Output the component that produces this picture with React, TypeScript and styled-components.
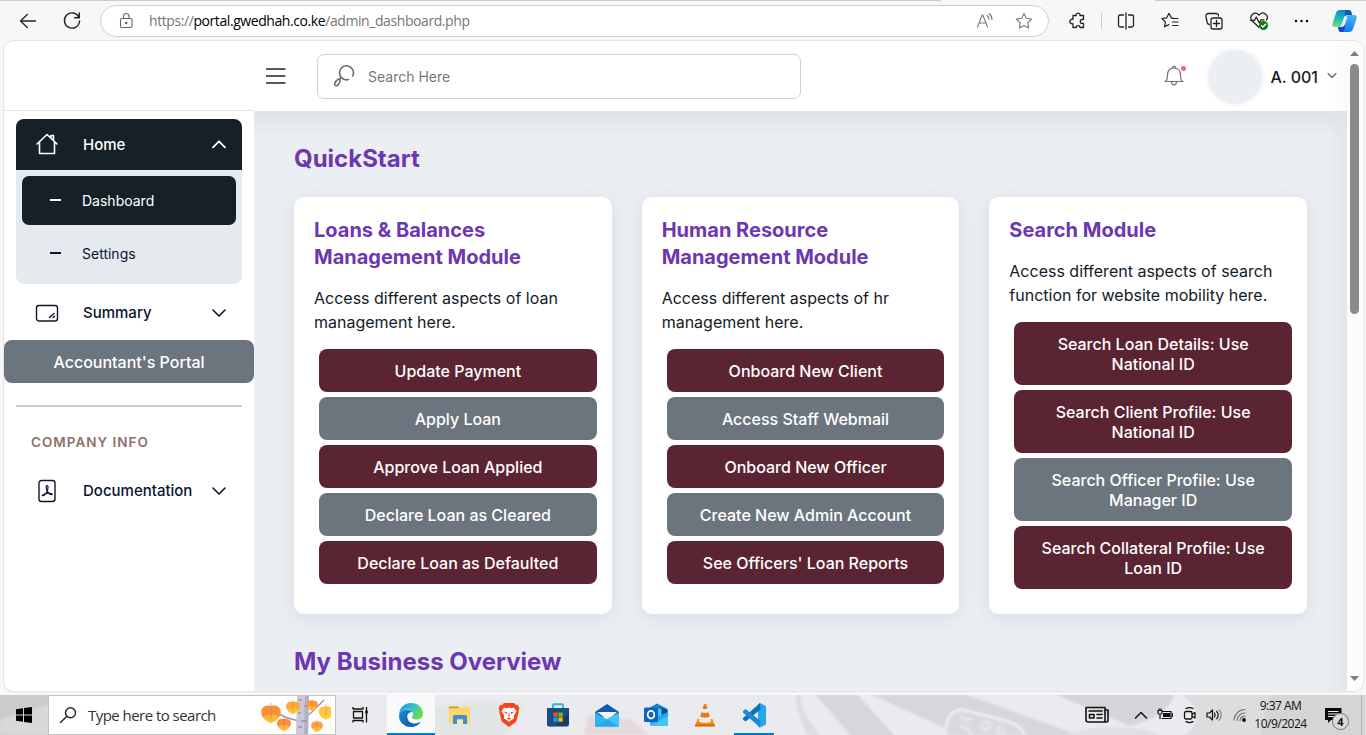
import React from "react";
import styled, { createGlobalStyle } from "styled-components";

const GlobalStyle = createGlobalStyle`
  * { box-sizing: border-box; }
  html, body { margin: 0; padding: 0; }
  body { width: 1366px; height: 735px; overflow: hidden; background: #f7f7f7; font-family: Inter, "Liberation Sans", sans-serif; color: #132027; }
  button { font: inherit; border: 0; cursor: pointer; }
  svg { display: block; flex: none; }
  h2, h3, p { margin: 0; }
`;

const Screen = styled.div`
  display: flex;
  flex-direction: column;
  width: 1366px;
  height: 735px;
`;

/* ---------- browser chrome ---------- */

const BrowserBar = styled.div`
  display: flex;
  align-items: center;
  height: 41px;
  flex: none;
  padding: 1px 0 0 18px;
  background: linear-gradient(90deg, #cbcbcb 941px, #f7f7f7 941px, #f7f7f7 1155px, #cbcbcb 1155px) top / 100% 1px no-repeat #f7f7f7;
`;

const BarIcon = styled.span<{ $gap?: number }>`
  display: flex;
  margin-left: ${(p) => p.$gap ?? 0}px;
`;

const AddressBar = styled.div`
  display: flex;
  align-items: center;
  width: 949px;
  flex: none;
  height: 32px;
  margin-left: 18px;
  padding: 0 15px 0 15px;
  border: 1px solid #cfcfcf;
  border-radius: 16px;
  background: #fff;
`;

const Url = styled.span`
  flex: 1;
  margin-left: 13px;
  font: 14px/20px "Open Sans", sans-serif;
  letter-spacing: -0.42px;
  color: #767676;
  white-space: nowrap;
  b { font-weight: 400; color: #000; }
`;

const BarDivider = styled.i`
  width: 1px;
  height: 16px;
  margin-left: 13px;
  background: #cdcdcd;
`;

/* ---------- page frame ---------- */

const Frame = styled.div`
  display: flex;
  width: 1359px;
  height: 650px;
  margin-left: 4px;
  flex: none;
  border-radius: 9px;
  overflow: hidden;
  background: #fff;
  box-shadow: 0 0 0 1px #e6e6e6, 0 1px 1px #c8c8c8;
`;

const Sidebar = styled.aside`
  display: flex;
  flex-direction: column;
  width: 250px;
  flex: none;
`;

const BrandArea = styled.div`
  height: 70px;
  flex: none;
  border-bottom: 1px solid #e2e3e4;
`;

const NavGroup = styled.div`
  margin: 8px 12px 0;
  border-radius: 8px;
  overflow: hidden;
  background: #e5eaee;
`;

const NavItem = styled.div<{ $active?: boolean }>`
  display: flex;
  align-items: center;
  height: 51px;
  padding: 0 15px ${(p) => (p.$active ? 1 : 0)}px 19px;
  font-size: 15px;
  font-weight: 500;
  color: ${(p) => (p.$active ? "#fff" : "#0b1330")};
  background: ${(p) => (p.$active ? "#152127" : "transparent")};
  span { flex: 1; margin-left: 24px; }
`;

const NavRow = styled.div<{ $top: number }>`
  margin: ${(p) => p.$top}px 12px 0;
`;

const SubItem = styled.div<{ $active?: boolean }>`
  display: flex;
  align-items: center;
  height: 49px;
  margin: ${(p) => (p.$active ? "6px 6px 0" : "4px 6px 6px")};
  padding: 0 28px;
  border-radius: 7px;
  font-size: 14px;
  color: ${(p) => (p.$active ? "#fff" : "#0b1330")};
  background: ${(p) => (p.$active ? "#152127" : "transparent")};
  &::before {
    content: "";
    width: 11px;
    height: 2px;
    margin: 0 21px 2px 0;
    background: currentColor;
  }
`;

const ActionButton = styled.button<{ $tone?: "wine" | "slate" }>`
  display: block;
  width: 100%;
  flex: none;
  padding: 11.5px 24px;
  border-radius: 8px;
  font-size: 16px;
  line-height: 20px;
  font-weight: 500;
  color: #fff;
  background: ${(p) => (p.$tone === "slate" ? "#6c757d" : "#5b2432")};
`;

const PortalButton = styled(ActionButton)`
  margin-top: 2px;
`;

const SideRule = styled.div`
  height: 2px;
  flex: none;
  margin: 22px 12px 0;
  background: #c9cbcb;
`;

const SideHeading = styled.div`
  margin: 26px 27px 0;
  font-size: 13.5px;
  line-height: 18px;
  font-weight: 600;
  letter-spacing: 1px;
  color: #8d7067;
`;

const Body = styled.div`
  display: flex;
  flex-direction: column;
  width: 1093px;
  flex: none;
`;

const TopBar = styled.header`
  display: flex;
  align-items: center;
  height: 70px;
  flex: none;
  padding: 0 10px 0 12px;
  background: linear-gradient(90deg, #fff 1073px, #fafafa 100%);
`;

const SearchBox = styled.div`
  display: flex;
  align-items: center;
  width: 484px;
  height: 45px;
  margin-left: 31px;
  padding-left: 15px;
  border: 1px solid #cfd1d4;
  border-radius: 7px;
  font-size: 14px;
  color: #717980;
  span { margin: 1px 0 0 13px; }
`;

const BellHolder = styled.div`
  position: relative;
  margin-left: auto;
`;

const BellDot = styled.i`
  position: absolute;
  top: 2px;
  right: -2px;
  width: 5px;
  height: 5px;
  border-radius: 50%;
  background: #ff5c8a;
`;

const Avatar = styled.div`
  width: 52px;
  height: 52px;
  margin: 1px 0 0 25px;
  border-radius: 50%;
  background: #ebeef3;
  box-shadow: 0 0 4px 1px #e6e8eb;
`;

const UserName = styled.span`
  margin: 2px 9px 0 9px;
  font-size: 16px;
  font-weight: 500;
`;

const Content = styled.main`
  flex: 1;
  overflow: hidden;
  padding: 33px 40px 0;
  background:
    linear-gradient(180deg, #dfe3e8 0, rgba(235, 238, 243, 0) 26px),
    linear-gradient(270deg, #e2e6eb 0, rgba(235, 238, 243, 0) 20px),
    #ebeef3;
`;

const SectionTitle = styled.h2`
  font-size: 24px;
  line-height: 29px;
  font-weight: 700;
  color: #6c37b0;
`;

const Cards = styled.div`
  display: grid;
  grid-template-columns: repeat(3, 1fr);
  gap: 30px;
  height: 417px;
  margin: 24px 0 33px;
`;

const Card = styled.section`
  padding: 20px;
  border-radius: 10px;
  background: #fff;
  box-shadow: 0 4px 20px 1px rgba(20, 40, 50, 0.07);
`;

const CardTitle = styled.h3`
  font-size: 20px;
  line-height: 27px;
  font-weight: 700;
  color: #6c37b0;
`;

const CardText = styled.p`
  margin-top: 15px;
  font-size: 16px;
  line-height: 24px;
  white-space: pre-line;
`;

const ButtonStack = styled.div`
  display: flex;
  flex-direction: column;
  gap: 5px;
  margin: 15px -5px 0 5px;
`;

const ScrollTrack = styled.div`
  display: flex;
  flex-direction: column;
  align-items: center;
  width: 15px;
  padding: 10px 0 10px;
  background: #fcfcfc;
`;

const ScrollThumb = styled.div`
  width: 9px;
  height: 250px;
  margin: 8px 0 auto;
  border-radius: 5px;
  background: #8a8a8a;
`;

/* ---------- desktop taskbar ---------- */

const Taskbar = styled.footer`
  position: relative;
  display: flex;
  align-items: stretch;
  height: 40px;
  margin-top: 4px;
  flex: none;
  isolation: isolate;
  overflow: hidden;
  background: #e9ebee;
`;

const Wallpaper = styled.svg`
  position: absolute;
  inset: 0;
  z-index: -1;
`;

const StartButton = styled.div`
  display: flex;
  align-items: center;
  justify-content: center;
  width: 48px;
  flex: none;
`;

const TaskSearch = styled.div`
  display: flex;
  align-items: center;
  width: 288px;
  flex: none;
  padding: 0 4px 0 10px;
  border: 1px solid #c4c4c4;
  background: #fff;
  font: 15px/20px "Open Sans", sans-serif;
  letter-spacing: -0.54px;
  color: #333;
  white-space: nowrap;
  span { flex: 1; margin-left: 11px; }
`;

const TaskItem = styled.div<{ $width?: number; $lit?: boolean; $running?: boolean }>`
  display: flex;
  align-items: center;
  justify-content: center;
  width: ${(p) => p.$width ?? 49}px;
  flex: none;
  background: ${(p) => (p.$lit ? "#f8f9fa" : "transparent")};
  box-shadow: ${(p) => (p.$running ? "inset 0 -2px #0078d4" : "none")};
`;

const Tray = styled.div`
  display: flex;
  align-items: center;
  margin-left: auto;
  padding-right: 16px;
`;

const Clock = styled.div`
  width: 61px;
  margin-left: 3px;
  font: 12px/18px "Open Sans", sans-serif;
  letter-spacing: -0.5px;
  text-align: center;
  color: #111;
  white-space: nowrap;
`;

const Notice = styled.div`
  position: relative;
  margin-left: 14px;
  padding-right: 8px;
`;

const NoticeCount = styled.span`
  position: absolute;
  left: 7px;
  top: 6px;
  width: 17px;
  height: 17px;
  border: 1px solid #777;
  border-radius: 50%;
  background: #d9dadb;
  font: 700 11px/15px "Open Sans", sans-serif;
  text-align: center;
  color: #111;
`;

/* ---------- icons ---------- */

type IconProps = { w?: number; h?: number; color?: string; sw?: number; children: React.ReactNode };

const Icon = ({ w = 20, h = 20, color = "#222", sw = 1.2, children }: IconProps) => (
  <svg width={w} height={h} viewBox={`0 0 ${w} ${h}`} fill="none" stroke={color} strokeWidth={sw} strokeLinecap="round" strokeLinejoin="round">
    {children}
  </svg>
);

const Chevron = ({ up = false, color = "#0b1330" }: { up?: boolean; color?: string }) => (
  <Icon w={16} h={16} color={color} sw={up ? 1.8 : 1.6}>
    <path d={up ? "M2 11.3 8 5.3l6 6" : "M2 5 8 11l6-6"} />
  </Icon>
);

const Edge = () => (
  <svg width="26" height="26" viewBox="0 0 26 26">
    <defs>
      <linearGradient id="edgeTop" x1="0" y1="0" x2="1" y2="0.4">
        <stop offset="0" stopColor="#2196d8" />
        <stop offset="0.55" stopColor="#2fc0cf" />
        <stop offset="1" stopColor="#66dd55" />
      </linearGradient>
      <linearGradient id="edgeLow" x1="0" y1="0" x2="1" y2="1">
        <stop offset="0" stopColor="#1b8bdc" />
        <stop offset="1" stopColor="#0c4f99" />
      </linearGradient>
    </defs>
    <path d="M1 14C1 6 6 1 13 1s12 5 12 10.500c0 4-3 6-6.500 6-3 0-4.500-1.200-4.500-2.200 0-.8 1.200-1.300 1.200-3.300 0-2.500-2.500-4.500-6-4.500C5 7.500 2 10 1 14Z" fill="url(#edgeTop)" />
    <path d="M1 14C1.500 10 5 7.700 9 7.700c2.500 0 4.600 1 5.600 2.400-3.600-.4-5.400 2-5.400 4.700 0 4.700 4.500 7.600 9 6.700 2-.4 3.500-1.200 4.200-1.400C20.600 23 17 25 13 25 6 25 1 20 1 14Z" fill="url(#edgeLow)" />
    <path d="M9.300 13c-1.500 6 3.500 10 9 8.600 2-.5 3.400-1.300 4.100-1.500C20.600 23 17 25 13.500 25 8 24 6 17 9.300 13Z" fill="#1667b3" />
  </svg>
);

const Explorer = () => (
  <svg width="22" height="20" viewBox="0 0 22 20">
    <path d="M0 1.500h9l2 2H0Z" fill="#d99a12" />
    <path d="M0 3.500h10l1.500-1.500H21V18H0Z" fill="#ffd667" />
    <path d="M4 19v-7.500C4 10.600 4.500 10 5.500 10h11c1 0 1.500.6 1.500 1.500V19h-4v-4.500H8V19Z" fill="#3f91d3" />
    <path d="M8 14.500h6V18H8Z" fill="#ffe79a" />
  </svg>
);

const Brave = () => (
  <svg width="22" height="24" viewBox="0 0 22 24">
    <path d="M6 0h10l2 2.200 2-.2 1.300 3.500-.8 2 .2 1.500-2.400 9.500L11 24l-7.300-5.500L1.300 9l.2-1.500-.8-2L2 2l2 .2Z" fill="#f8421c" />
    <path d="m6 4.500 2.500.7 2.500-.7 2.500.7 2.500-.7 2.500 4-2.700 4 .2 3-2.200 1.200-2.800 2.300-2.800-2.300L6 15.500l.2-3-2.700-4Z" fill="#fff" />
    <path d="m5.700 8.500 3.700.7-.9 1.900Zm10.600 0-3.700.7.900 1.900ZM11 8.500l.7 4.500-.7 1-.7-1Zm-2.300 7 2.300-1 2.300 1-2.300 1.300Z" fill="#f8421c" />
  </svg>
);

const Store = () => (
  <svg width="24" height="24" viewBox="0 0 24 24">
    <path d="M7 5.500V2.200c0-.5.400-.9.900-.9h8.200c.5 0 .9.400.9.900v3.300" fill="none" stroke="#25b5ed" strokeWidth="1.900" />
    <path d="M1 5h22v16a2.500 2.500 0 0 1-2.500 2.500h-17A2.500 2.500 0 0 1 1 21Z" fill="#1b3c66" />
    <path d="M1 5h22v5L8 23.500H3.500A2.500 2.500 0 0 1 1 21Z" fill="#1a5c96" opacity=".55" />
    <path d="M7.500 9.500h4.200v4.200H7.500Z" fill="#f25022" />
    <path d="M12.500 9.500h4.200v4.200h-4.200Z" fill="#7fba00" />
    <path d="M7.500 14.500h4.200v4.200H7.500Z" fill="#00a4ef" />
    <path d="M12.500 14.500h4.200v4.200h-4.200Z" fill="#ffb900" />
  </svg>
);

const Mail = () => (
  <svg width="24" height="23" viewBox="0 0 24 23">
    <path d="M0 8 12 0l12 8v5H0Z" fill="#0b5cab" />
    <path d="M2 8h20l-9 8Z" fill="#f2f4f6" />
    <path d="M0 8.500 24 22.500H0Z" fill="#2fb4f0" />
    <path d="M24 8.500v14L0 22.500 11.500 15Z" fill="#42c4f7" />
    <path d="m0 22.500 12-7.200L24 22.500Z" fill="#27a6ea" />
  </svg>
);

const Outlook = () => (
  <svg width="24" height="24" viewBox="0 0 24 24">
    <path d="m5 5 8-4.500L23.500 6v8H5Z" fill="#1383d2" />
    <path d="m15 4 8.500 3v7L14 17Z" fill="#0a4c91" />
    <path d="M10 5.500h7.500V13H10Z" fill="#46c2f5" />
    <path d="M6 14h6l12-5v12a2 2 0 0 1-2 2H8a2 2 0 0 1-2-2Z" fill="#25a9ec" />
    <path d="M6 22.500 24 13v8a2 2 0 0 1-2 2H8Z" fill="#42c5f6" />
    <rect x="0" y="4.500" width="14" height="14.500" rx="1.200" fill="#0f65bd" />
    <ellipse cx="7" cy="11.700" rx="3.300" ry="3.800" fill="none" stroke="#fff" strokeWidth="1.800" />
  </svg>
);

const Cone = () => (
  <svg width="22" height="24" viewBox="0 0 22 24">
    <path d="M3.500 16h15L21 23H1Z" fill="#f48b13" />
    <path d="M1 21.500h20V23.500H1Z" fill="#d66700" />
    <path d="M9.600 2c.3-1.200 2.500-1.200 2.800 0l4.800 16.300c-2 2-10.400 2-12.400 0Z" fill="#f0eeec" />
    <path d="M9.600 2c.3-1.200 2.500-1.200 2.800 0l1 3.500c-1 .8-3.800.8-4.800 0ZM7.500 9.300c1.700 1 5.300 1 7 0l1.300 4.300c-2 1.500-7.600 1.500-9.600 0Z" fill="#ee7618" />
  </svg>
);

const Code = () => (
  <svg width="25" height="25" viewBox="0 0 25 25">
    <path d="m18 0 6 3v18.500l-6 3-2-1V1.500Z" fill="#27a5ee" />
    <path d="m18 0 .5 6.500L3.600 18.500 1 16.500v-1.600Z" fill="#0874bd" />
    <path d="M1 9.500v-1.600l2.600-2 14.900 12L18 24.500Z" fill="#168bd3" />
  </svg>
);

const Copilot = () => (
  <svg width="25" height="24" viewBox="0 0 25 24">
    <defs>
      <linearGradient id="copLeft" x1="0.5" y1="0" x2="0.3" y2="1">
        <stop offset="0" stopColor="#0c86d2" />
        <stop offset="0.5" stopColor="#20b9ae" />
        <stop offset="1" stopColor="#72dc82" />
      </linearGradient>
      <linearGradient id="copRight" x1="0.5" y1="0" x2="0.5" y2="1">
        <stop offset="0" stopColor="#49b4f4" />
        <stop offset="1" stopColor="#147cf0" />
      </linearGradient>
    </defs>
    <path d="M8 1h9c2 0 2.500 2 3 5h-4.500c-2 0-3 1-3.700 3l-2 6c-.8 2.200-2 3-4 3H3c-2.500 0-3-1.500-2.400-4L4 4c.7-2 2-3 4-3Z" fill="url(#copLeft)" />
    <path d="M13 1h4c2 0 2.500 2 3 5h-4.500c-1 0-2 .5-2.500 1.500Z" fill="#1155b5" />
    <path d="M17 23H9c-2 0-2.500-2-3-5h1.500c2 0 3.200-.8 4-3l2-6c.7-2 1.500-3 3.500-3h5c2.500 0 3 1.500 2.400 4L21 20c-.7 2-2 3-4 3Z" fill="url(#copRight)" />
    <path d="M6 18h1.500c2 0 3.200-.8 4-3l1-3 .5 8-2 3H9c-2 0-2.500-2-3-5Z" fill="#1649c8" />
    <path d="M15.500 7 13 15c-1 2.500-2 3-5 3 2.500-1 3-2 3.500-4l2-5Z" fill="#f7f7f7" />
  </svg>
);

const leaves = [
  [17, 17, 10, "#fb9038"],
  [39, 11, 7, "#fda92d"],
  [30, 28, 7, "#fb8c3c"],
  [58, 9, 6, "#f99743"],
  [72, 16, 7.5, "#ffc642"],
  [63, 30, 6, "#fba13f"],
] as const;

const AutumnTree = () => (
  <svg width="70" height="38" viewBox="3 0 70 38">
    <path d="M18 17 30 22l14 4M38 14l8 9M66 4 54 16l-6 5M52 5l2 9" stroke="#9a98a8" strokeWidth="1.500" fill="none" />
    <path d="M39 0h12l-1 38H38Z" fill="#c9c7d8" />
    <path d="M47 0h4l-1 38h-4Z" fill="#b3b0c6" />
    <path d="M40 4h4M46 10h4M40 17h3M43 25h6M40 31h4" stroke="#86839a" strokeWidth="1" />
    {leaves.map(([x, y, r, fill]) => (
      <g key={x} transform={`translate(${x - 4} ${y})`}>
        <path d={`M0 ${r}C${-r * 1.500} ${r * 0.4} ${-r * 1.100} ${-r} 0 ${-r * 0.7}C${r * 1.100} ${-r} ${r * 1.500} ${r * 0.4} 0 ${r}Z`} fill={fill} />
        <path d={`M0 ${r}C${-r * 1.100} ${r * 0.7} ${-r * 0.9} ${r * 0.1} 0 ${r * 0.2}C${r * 0.9} ${r * 0.1} ${r * 1.100} ${r * 0.7} 0 ${r}Z`} fill="#ffd33d" opacity=".6" />
        <path d={`M0 ${-r}V${r * 0.6}`} stroke="#d77b20" strokeWidth=".5" />
      </g>
    ))}
  </svg>
);

/* ---------- data ---------- */

type Action = [string, "wine" | "slate"];
const modules: { title: string; text: string; actions: Action[] }[] = [
  {
    title: "Loans & Balances Management Module",
    text: "Access different aspects of loan\nmanagement here.",
    actions: [
      ["Update Payment", "wine"],
      ["Apply Loan", "slate"],
      ["Approve Loan Applied", "wine"],
      ["Declare Loan as Cleared", "slate"],
      ["Declare Loan as Defaulted", "wine"],
    ],
  },
  {
    title: "Human Resource Management Module",
    text: "Access different aspects of hr\nmanagement here.",
    actions: [
      ["Onboard New Client", "wine"],
      ["Access Staff Webmail", "slate"],
      ["Onboard New Officer", "wine"],
      ["Create New Admin Account", "slate"],
      ["See Officers' Loan Reports", "wine"],
    ],
  },
  {
    title: "Search Module",
    text: "Access different aspects of search\nfunction for website mobility here.",
    actions: [
      ["Search Loan Details: Use National ID", "wine"],
      ["Search Client Profile: Use National ID", "wine"],
      ["Search Officer Profile: Use Manager ID", "slate"],
      ["Search Collateral Profile: Use Loan ID", "wine"],
    ],
  },
];

const STAR = "M9 1.500 11.300 6.300 16.600 7 12.700 10.700 13.700 16 9 13.400 4.300 16 5.300 10.700 1.400 7 6.700 6.300Z";

const Browser = () => (
  <BrowserBar>
    <BarIcon><Icon sw={1.3}><path d="M17.500 10H2.500M9.300 3.500 2.500 10l6.800 6.500" /></Icon></BarIcon>
    <BarIcon $gap={24}><Icon sw={1.4}><path d="M17 6.500A7.600 7.600 0 1 0 17.600 10M17.300 2v4.700h-4.600" /></Icon></BarIcon>
    <AddressBar>
      <Icon color="#666" sw={1.1}><rect x="4.500" y="7.500" width="11.500" height="9" rx="1.500" /><path d="M7.500 7.500V4.800a2.800 2.800 0 0 1 5.500 0v2.700" /><circle cx="10.200" cy="12" r=".7" fill="#666" /></Icon>
      <Url>https://<b>portal.gwedhah.co.ke</b>/admin_dashboard.php</Url>
      <Icon color="#777" sw={1.1}><path d="m2.500 16 4.700-12h.6l4.700 12M4.200 12h6.600M12 4.500c1.400 1 2 2.400 2 4M14 2.500c2 1.500 3 3.500 3 6" /></Icon>
      <BarIcon $gap={20}><Icon w={18} h={18} color="#777" sw={1.1}><path d={STAR} /></Icon></BarIcon>
    </AddressBar>
    <BarIcon $gap={19}><Icon sw={1.3}><path d="M5 4.500h3.200c-.5-3.300 4.300-3.300 3.800 0h3.500v4h-1.300a1.900 1.900 0 0 0 0 3.800h1.300v4.200H12c0-2.600-3.800-2.600-3.800 0H5v-3.800c-4.200.8-4.200-5.200 0-4.400Z" /></Icon></BarIcon>
    <BarDivider />
    <BarIcon $gap={14}><Icon sw={1.3}><path d="M7.500 4H4.200C3 4 2.500 4.600 2.500 5.500v9c0 .9.500 1.500 1.700 1.500h3.300M12.500 4h3.300c1.200 0 1.700.6 1.700 1.500v9c0 .9-.5 1.500-1.700 1.500h-3.300M10 2v16" /></Icon></BarIcon>
    <BarIcon $gap={25}><Icon sw={1.2}><path d="M12 7 10.300 6.800 8 2.300 5.700 6.800.9 7.500l3.500 3.400-.8 4.900 4.200-2.200M11.500 7.500H17M11.500 11H17M11.500 14.500H17" /></Icon></BarIcon>
    <BarIcon $gap={23}><Icon sw={1.300}><rect x="7" y="7" width="11" height="11" rx="2" /><path d="M12.500 9.500v6M9.500 12.500h6M14.500 5c0-1.800-.8-2.500-2.500-2.500H4.500C2.800 2.500 1.500 3.800 1.900 5.500l1.300 6c.3 1.200 1 1.800 2 2" /></Icon></BarIcon>
    <BarIcon $gap={25}><Icon sw={1.300}><path d="M10 16.300 3 9.800C-1 5 6-1 10 4.200 14-1 20.500 4.500 17.500 9M1.500 9.300h4L7.300 6l3 6L12 8.800h3" /><circle cx="14.500" cy="14.500" r="4.500" fill="#127a16" stroke="none" /><path d="m12.500 14.600 1.400 1.400 2.700-2.800" stroke="#fff" /></Icon></BarIcon>
    <BarIcon $gap={23}><svg width="20" height="20"><circle cx="4" cy="10" r="1.200" /><circle cx="9.500" cy="10" r="1.200" /><circle cx="15" cy="10" r="1.200" /></svg></BarIcon>
    <BarIcon $gap={20}><Copilot /></BarIcon>
  </BrowserBar>
);

const SideNav = () => (
  <Sidebar>
    <BrandArea />
    <NavGroup>
      <NavItem $active>
        <Icon w={24} h={24} color="#fff" sw={1.6}><path d="m2 12 10-9.500L22 12M4.500 10v11.500h15V10M16 5.500V3.500h2.500V8" /></Icon>
        <span>Home</span>
        <Chevron up color="#fff" />
      </NavItem>
      <SubItem $active>Dashboard</SubItem>
      <SubItem>Settings</SubItem>
    </NavGroup>
    <NavRow $top={3}>
      <NavItem>
        <Icon w={24} h={24} color="#10162f" sw={1.4}><rect x="1.500" y="4.500" width="21" height="15.500" rx="2.500" /><path d="m14.500 16.500 4.500-4M18 16.500l1.500-1.300" /></Icon>
        <span>Summary</span>
        <Chevron />
      </NavItem>
    </NavRow>
    <PortalButton $tone="slate">Accountant's Portal</PortalButton>
    <SideRule />
    <SideHeading>COMPANY INFO</SideHeading>
    <NavRow $top={14}>
      <NavItem>
        <Icon w={24} h={24} color="#10162f" sw={1.4}><rect x="4" y="1.500" width="16" height="21" rx="2.500" /><path d="M12.200 6.500c-1.500 0-1.100 3.500 0 5.500.9 1.900 3 3.800 5 3.500-.3-2-7-2.200-9.900 1 1.700 1 4.200-2.500 4.900-4.500.9-2 1.200-5.500 0-5.500Z" strokeWidth="1.200" /></Icon>
        <span>Documentation</span>
        <Chevron />
      </NavItem>
    </NavRow>
  </Sidebar>
);

const Header = () => (
  <TopBar>
    <Icon w={20} h={20} color="#555b5f" sw={1.8}><path d="M0 3h19.500M0 10h19.500M0 17h19.500" strokeLinecap="butt" /></Icon>
    <SearchBox>
      <Icon w={22} h={22} color="#6c6c6c" sw={1.6}><path d="M15.500 14.500A7 7 0 1 1 19.700 11M7.500 13.200 6 14.500M6.300 13.800C4 14.500 1.500 17.500 1.600 19c.1 2 2.300 2 3.400.9C6.200 18.500 8 16 6.300 13.800Z" /></Icon>
      <span>Search Here</span>
    </SearchBox>
    <BellHolder>
      <Icon w={20} h={24} color="#737373" sw={1.2}><path d="M1 17.500h18M1.500 17.500C3.500 16 3.500 14 3.500 11 3.500 6.500 6 4 10 4s6.500 2.500 6.500 7c0 3 0 5 2 6.500M8.300 4c0-2.300 3.400-2.300 3.400 0M7.500 18c.3 4 4.700 4 5 0" /></Icon>
      <BellDot />
    </BellHolder>
    <Avatar />
    <UserName>A. 001</UserName>
    <Icon w={10} h={10} color="#61686c" sw={1.2}><path d="m1 2.500 4 4 4-4" /></Icon>
  </TopBar>
);

const DesktopBar = () => (
  <Taskbar>
    <Wallpaper width="1366" height="40" viewBox="0 0 1366 40">
      <defs>
        <filter id="soft" x="-2%" y="-20%" width="104%" height="140%"><feGaussianBlur stdDeviation="1" /></filter>
      </defs>
      <path d="M0 0h49v40H0Z" fill="#cccccd" />
      <g filter="url(#soft)">
        <path d="M0 24 49 10v30H0Z" fill="#d8d8d9" />
        <path d="M435 13c40-12 60-5 90-3l-20 30h-70Z" fill="#e1e5e5" />
        <path d="m588 20 42 4 20 16h-66Z" fill="#e4dadd" />
        <path d="M796-2h6c-2 20 8 25 18 44h-12c-6-15-12-25-12-44Z" fill="#dcdde0" />
        <path d="M814-2h42l40 44h-44ZM868-2h94l122 44h-70l-62-4-16-9Z" fill="#d6d7da" />
        <path d="M946 42c-2-14 4-29 18-27l40 10c14 4 20 10 22 17Z" fill="#d9dadd" stroke="#eff0f3" strokeWidth="2.500" />
        <path d="m961 22 7 3 4-2M960 31l8 3 4 6" fill="none" stroke="#e5e7ea" strokeWidth="3" />
        <circle cx="986" cy="31" r="4" fill="none" stroke="#e5e7ea" strokeWidth="3" />
        <path d="m1000 31-3 9M1005 34l-3 8" fill="none" stroke="#e5e7ea" strokeWidth="3" />
        <path d="M1053-2h122c-6 18-22 27-45 33Z" fill="#d4d5d8" />
        <path d="M1060 42c30-14 60-10 85-8l20 8Z" fill="#e0e1e4" />
        <path d="M1180-2h190v44h-190c22-8 22-30 0-44Z" fill="#dcddde" />
        <path d="M1270-2h96v44h-106Z" fill="#d5d5d4" />
      </g>
      <path d="M1361.500 0v40" stroke="#b3b3b3" />
    </Wallpaper>
    <StartButton><svg width="16" height="16"><path d="M0 2.300 7 1.200v6.300H0ZM8 1l8-1v7.500H8ZM0 8.500h7v6.300l-7-1.100ZM8 8.500h8V16l-8-1Z" fill="#000" /></svg></StartButton>
    <TaskSearch>
      <Icon w={18} h={18} color="#222" sw={1.4}><circle cx="11.500" cy="6.700" r="5" /><path d="m7.800 10.300-6.300 6.200" /></Icon>
      <span>Type here to search</span>
      <AutumnTree />
    </TaskSearch>
    <TaskItem $width={51}><Icon w={20} h={18} color="#111" sw={1.3}><path d="M1.500 5.500h9v6.500h-9ZM1 1v2h10V1M1 16.500v-2h10v2M14.500 1v15.500" strokeLinecap="butt" /><path d="M13.300 4.500h2.400v3h-2.400Z" fill="#111" stroke="none" /></Icon></TaskItem>
    <TaskItem $width={48} $lit $running><Edge /></TaskItem>
    <TaskItem><Explorer /></TaskItem>
    <TaskItem><Brave /></TaskItem>
    <TaskItem><Store /></TaskItem>
    <TaskItem><Mail /></TaskItem>
    <TaskItem><Outlook /></TaskItem>
    <TaskItem><Cone /></TaskItem>
    <TaskItem $width={5} />
    <TaskItem $width={40} $running><Code /></TaskItem>
    <Tray>
      <Icon w={24} h={18} color="#111" sw={1.6}><path d="M1 1.500h19V16H3.500C2 16 1 15 1 14ZM20 4h3v10.500c0 1-.8 1.500-1.500 1.500H20M4 5h13M12 8.500h5M12 12h5M4.500 8.500h4.500V12H4.500Z" /></Icon>
      <BarIcon $gap={25}><Icon w={14} h={14} color="#111" sw={1.5}><path d="m1.500 10 5.500-5.500 5.500 5.500" /></Icon></BarIcon>
      <BarIcon $gap={9}><Icon w={16} h={14} color="#111" sw={1.2}><path d="M5.500 3.500H14v7H5M15.500 5.500v3" /><path d="M6.500 5.500h6v3h-6Z" fill="#111" /><path d="M1 2.500h4v2.200c0 2-4 2-4 0ZM2 .8v1.500M4 .8v1.500M3 6.500V10.500" /></Icon></BarIcon>
      <BarIcon $gap={10}><Icon w={14} h={18} color="#111" sw={1.300}><rect x="1.500" y="5.500" width="7.500" height="7.500" rx="1.500" /><path d="m9.500 8 2.500-1.500v5.500L9.500 10.500M3 2.500c2-1 5-1 7 0M3 15.700c2 1 5 1 7 0" /></Icon></BarIcon>
      <BarIcon $gap={9}><Icon w={17} h={14} color="#111" sw={1.2}><path d="M1 5h2.500L6.500 2v10L3.500 9H1ZM8.500 5c1 1.500 1 2.500 0 4M10.700 3.300c2 2.500 2 5 0 7.400" /><path d="M13 1.700c3 3.500 3 7 0 10.600" stroke="#888" /></Icon></BarIcon>
      <BarIcon $gap={10}><Icon w={14} h={14} color="#777" sw={1.2}><path d="M1 12C1.500 6 6 1.500 12 1.500M4 12.500c.3-4 3.500-7.500 8-7.500M7 12.800C7 10 9 8.500 12 8.200" /><circle cx="11" cy="12" r="1.300" fill="#111" stroke="#111" /></Icon></BarIcon>
      <Clock>9:37 AM<br />10/9/2024</Clock>
      <Notice>
        <svg width="17" height="17"><path d="M0 1h16.500v12H6l-3 3v-3H0Z" fill="#0a0a0a" /><path d="M3 4.500h10.500M3 7h10.500M3 9.500h6" stroke="#eee" /></svg>
        <NoticeCount>4</NoticeCount>
      </Notice>
    </Tray>
  </Taskbar>
);

export default function App() {
  return (
    <Screen>
      <GlobalStyle />
      <Browser />
      <Frame>
        <SideNav />
        <Body>
          <Header />
          <Content>
            <SectionTitle>QuickStart</SectionTitle>
            <Cards>
              {modules.map((m) => (
                <Card key={m.title}>
                  <CardTitle>{m.title}</CardTitle>
                  <CardText>{m.text}</CardText>
                  <ButtonStack>
                    {m.actions.map(([label, tone]) => (
                      <ActionButton key={label} $tone={tone}>{label}</ActionButton>
                    ))}
                  </ButtonStack>
                </Card>
              ))}
            </Cards>
            <SectionTitle>My Business Overview</SectionTitle>
          </Content>
        </Body>
        <ScrollTrack>
          <svg width="9" height="5"><path d="M0 5 4.500 0 9 5Z" fill="#7e7e7e" /></svg>
          <ScrollThumb />
          <svg width="9" height="5"><path d="M0 0h9L4.500 5Z" fill="#7e7e7e" /></svg>
        </ScrollTrack>
      </Frame>
      <DesktopBar />
    </Screen>
  );
}
